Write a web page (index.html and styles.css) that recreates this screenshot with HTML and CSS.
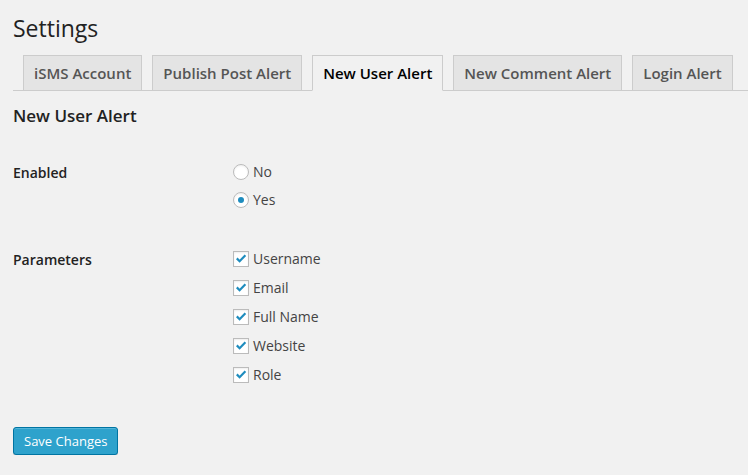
FILE: index.html
```html
<!DOCTYPE html>
<html>
<head>
<meta charset="utf-8">
<link rel="stylesheet" href="styles.css">
</head>
<body>
<div class="wrap">
  <h1 class="title">Settings</h1>
  <nav class="tabs">
    <span class="tab">iSMS Account</span>
    <span class="tab">Publish Post Alert</span>
    <span class="tab tab-active">New User Alert</span>
    <span class="tab">New Comment Alert</span>
    <span class="tab">Login Alert</span>
  </nav>
  <h2 class="section-title">New User Alert</h2>
  <div class="row row-enabled">
    <div class="label">Enabled</div>
    <div class="field field-radios">
      <label class="opt"><span class="radio"></span><span class="opt-text">No</span></label>
      <label class="opt"><span class="radio radio-on"><span class="dot"></span></span><span class="opt-text">Yes</span></label>
    </div>
  </div>
  <div class="row row-params">
    <div class="label">Parameters</div>
    <div class="field field-checks">
      <label class="opt"><span class="check"><svg viewBox="0 0 16 16" width="16" height="16"><path d="M3.8 7.4 L6.6 10.2 L12.4 4.2" fill="none" stroke="#1e8cbe" stroke-width="2.2"/></svg></span><span class="opt-text">Username</span></label>
      <label class="opt"><span class="check"><svg viewBox="0 0 16 16" width="16" height="16"><path d="M3.8 7.4 L6.6 10.2 L12.4 4.2" fill="none" stroke="#1e8cbe" stroke-width="2.2"/></svg></span><span class="opt-text">Email</span></label>
      <label class="opt"><span class="check"><svg viewBox="0 0 16 16" width="16" height="16"><path d="M3.8 7.4 L6.6 10.2 L12.4 4.2" fill="none" stroke="#1e8cbe" stroke-width="2.2"/></svg></span><span class="opt-text">Full Name</span></label>
      <label class="opt"><span class="check"><svg viewBox="0 0 16 16" width="16" height="16"><path d="M3.8 7.4 L6.6 10.2 L12.4 4.2" fill="none" stroke="#1e8cbe" stroke-width="2.2"/></svg></span><span class="opt-text">Website</span></label>
      <label class="opt"><span class="check"><svg viewBox="0 0 16 16" width="16" height="16"><path d="M3.8 7.4 L6.6 10.2 L12.4 4.2" fill="none" stroke="#1e8cbe" stroke-width="2.2"/></svg></span><span class="opt-text">Role</span></label>
    </div>
  </div>
  <div class="actions">
    <button class="button-primary" type="button">Save Changes</button>
  </div>
</div>
</body>
</html>
```
FILE: styles.css
```css
html, body {
  margin: 0;
  padding: 0;
  background: #f1f1f1;
}
body {
  font-family: "Open Sans", "Liberation Sans", sans-serif;
  color: #444;
  font-size: 14px;
}
.wrap {
  padding: 13px 0 0 13px;
}
.title {
  margin: 0;
  font-size: 23px;
  line-height: 30px;
  font-weight: 400;
  color: #222;
}
.tabs {
  display: flex;
  align-items: flex-end;
  margin-top: 12px;
  border-bottom: 1px solid #ccc;
  padding-left: 10px;
  gap: 10px;
}
.tab {
  display: block;
  margin-bottom: -1px;
  padding: 5px 10px;
  font-size: 15px;
  line-height: 24px;
  font-weight: 600;
  color: #555;
  background: #e4e4e4;
  border: 1px solid #ccc;
  white-space: nowrap;
}
.tab-active {
  background: #f1f1f1;
  color: #000;
  border-bottom-color: #f1f1f1;
}
.section-title {
  margin: 14px 0 0;
  font-size: 17px;
  line-height: 22px;
  font-weight: 600;
  color: #222;
}
.row {
  display: flex;
}
.row-enabled {
  margin-top: 37px;
}
.row-params {
  margin-top: 43px;
}
.label {
  width: 220px;
  font-weight: 600;
  color: #222;
  line-height: 16px;
  padding-top: 1px;
}
.field {
  display: flex;
  flex-direction: column;
}
.field-radios {
  gap: 12px;
}
.field-checks {
  gap: 13px;
}
.opt {
  display: flex;
  align-items: center;
  height: 16px;
}
.opt-text {
  line-height: 16px;
  margin-left: 4px;
  color: #444;
}
.radio, .check {
  box-sizing: border-box;
  width: 16px;
  height: 16px;
  background: #fff;
  border: 1px solid #bbb;
  box-shadow: inset 0 1px 2px rgba(0,0,0,.07);
  display: flex;
  align-items: center;
  justify-content: center;
}
.radio {
  border-radius: 50%;
}
.dot {
  width: 6px;
  height: 6px;
  border-radius: 50%;
  background: #1e8cbe;
}
.check svg {
  display: block;
  margin: -1px;
}
.actions {
  margin-top: 44px;
}
.button-primary {
  box-sizing: border-box;
  height: 28px;
  padding: 0 10px 1px;
  font-family: "Open Sans", "Liberation Sans", sans-serif;
  font-size: 13px;
  line-height: 26px;
  color: #fff;
  background: #2ea2cc;
  border: 1px solid #0074a2;
  border-radius: 3px;
  box-shadow: inset 0 1px 0 rgba(120,200,230,.5), 0 1px 0 rgba(0,0,0,.15);
  cursor: pointer;
}
```
